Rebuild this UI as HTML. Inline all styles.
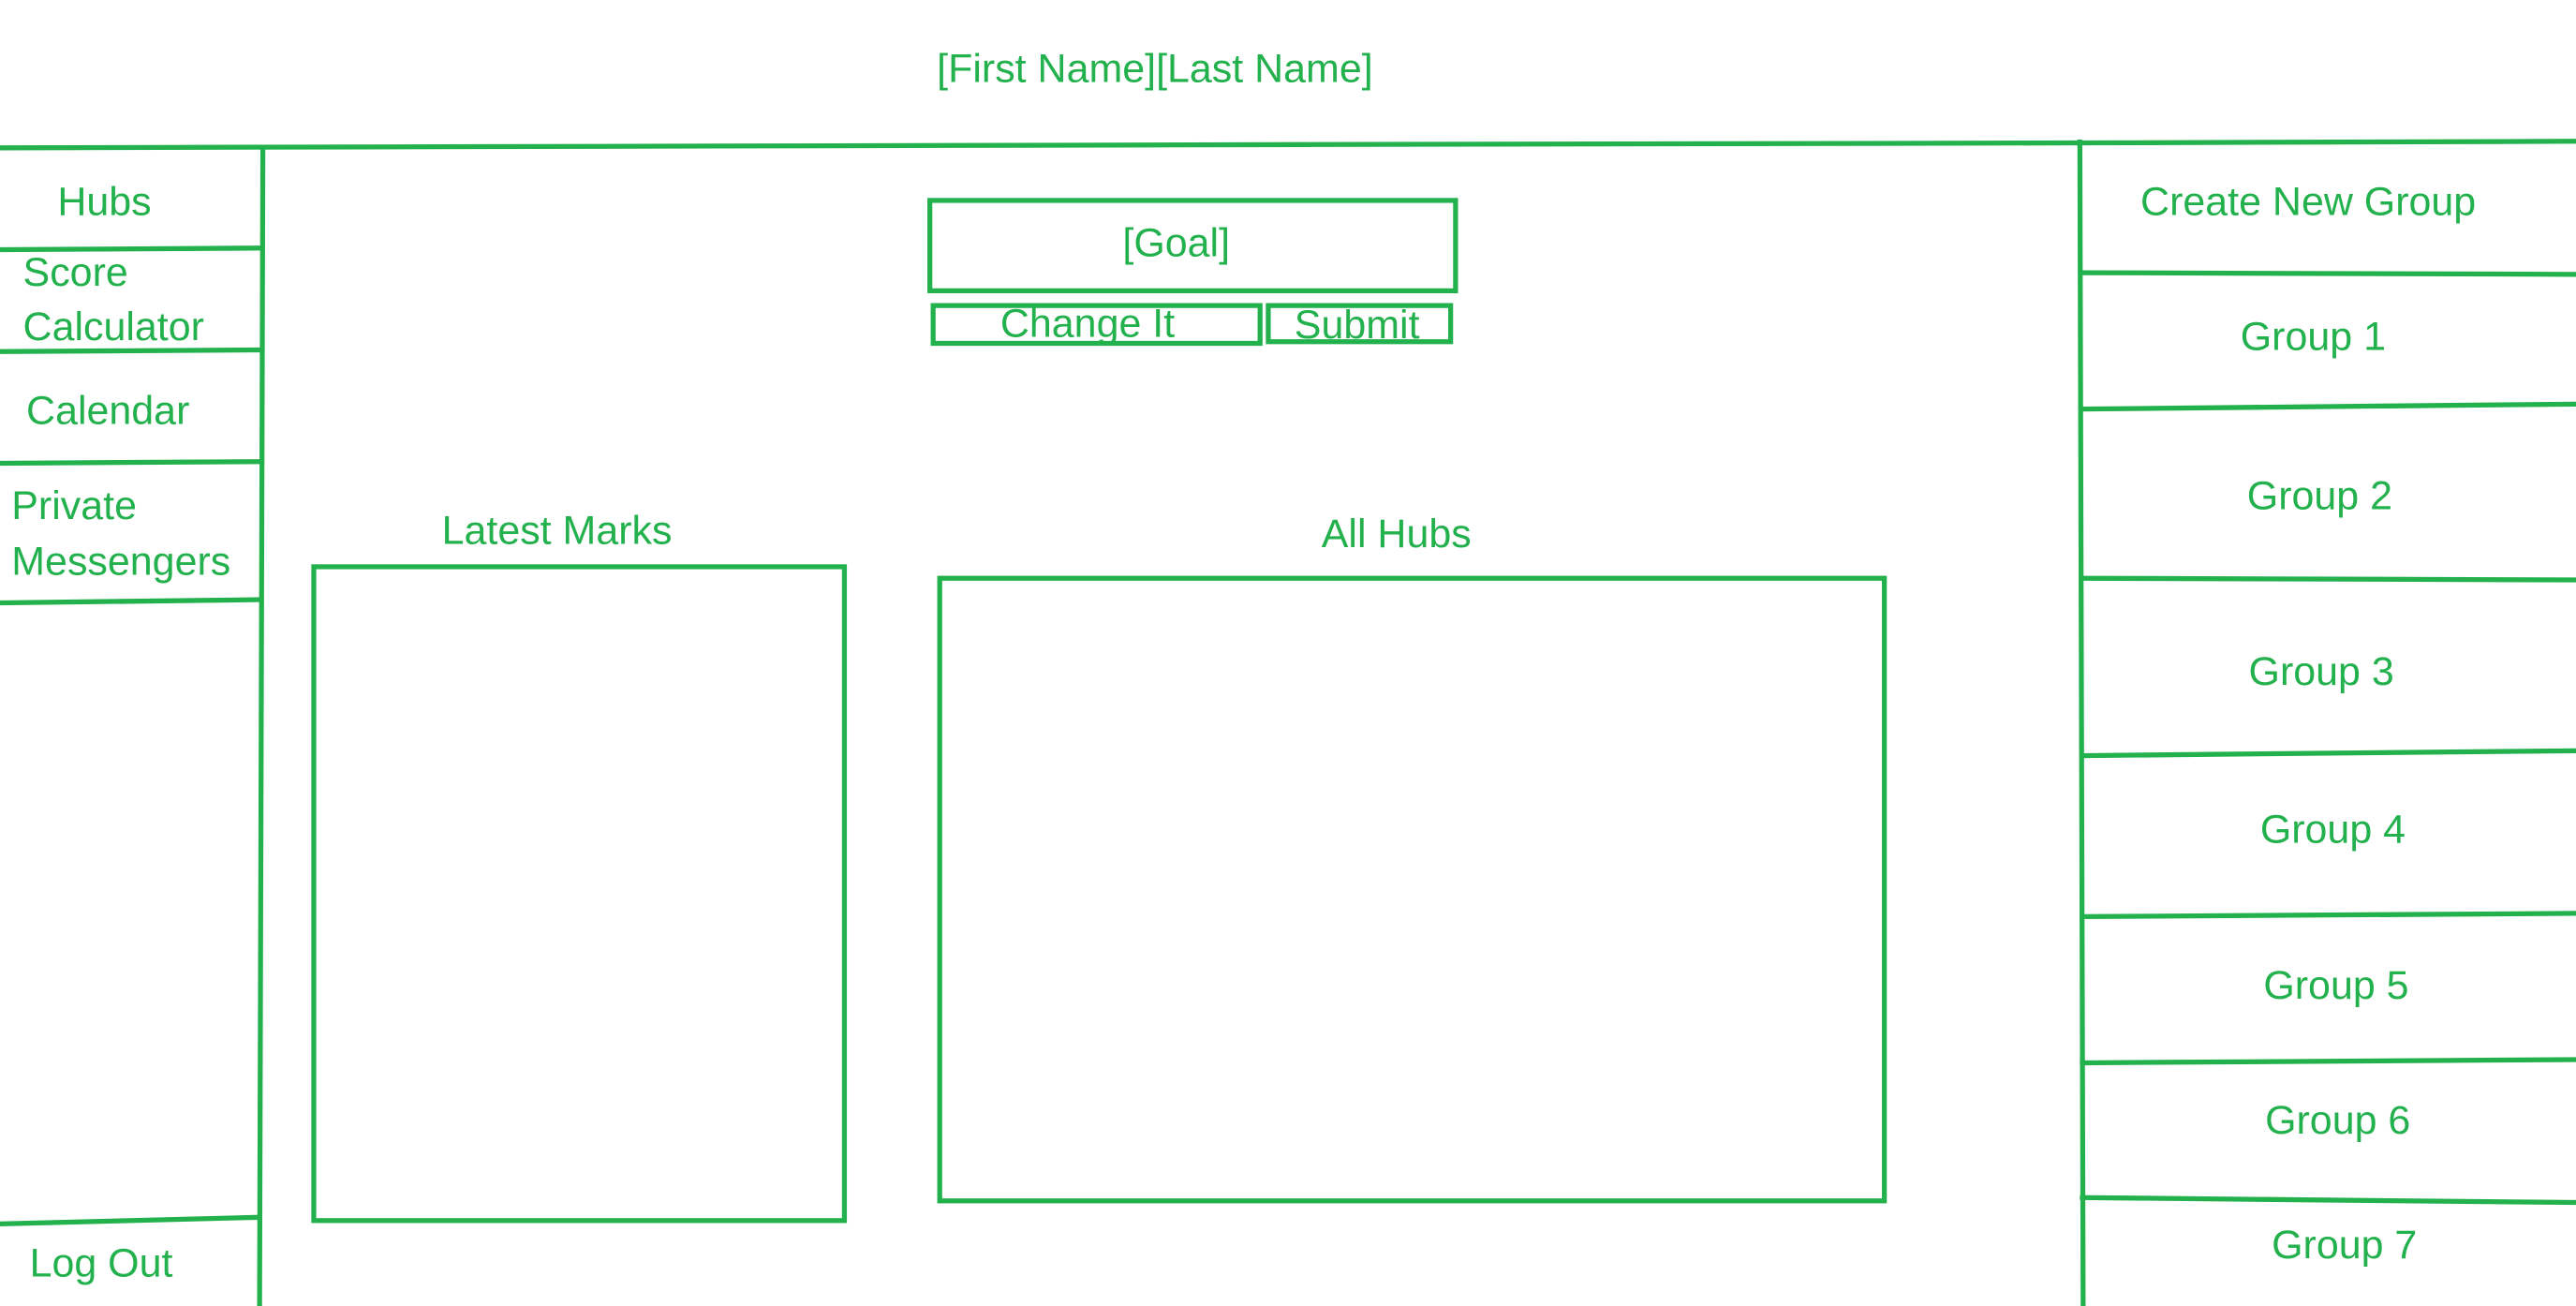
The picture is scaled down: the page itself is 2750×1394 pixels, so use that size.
<!DOCTYPE html>
<html><head><meta charset="utf-8"><style>
html,body{margin:0;padding:0;background:#fff;width:2750px;height:1394px;overflow:hidden}
svg{display:block}
text{font-family:"Liberation Sans",sans-serif;font-size:24.5px;fill:#22b14c}
</style></head><body>
<svg width="2750" height="1394" viewBox="0 0 1568 795" preserveAspectRatio="none">
<g stroke="#22b14c" stroke-width="3" fill="none">
<polyline points="0,90 800,88 1266,87 1568,86"/>
<line x1="160" y1="90" x2="158" y2="795"/>
<line x1="0" y1="152" x2="160" y2="151"/>
<line x1="0" y1="214" x2="160" y2="213"/>
<line x1="0" y1="282" x2="160" y2="281"/>
<line x1="0" y1="367" x2="160" y2="365"/>
<line x1="0" y1="745" x2="158" y2="741"/>
<line x1="1266" y1="85" x2="1268" y2="795"/>
<line x1="1266" y1="166" x2="1568" y2="167"/>
<line x1="1266" y1="249" x2="1568" y2="246"/>
<line x1="1266" y1="352" x2="1568" y2="353"/>
<line x1="1266" y1="460" x2="1568" y2="457"/>
<line x1="1266" y1="558" x2="1568" y2="556"/>
<line x1="1266" y1="647" x2="1568" y2="645"/>
<line x1="1266" y1="729" x2="1568" y2="732"/>
<rect x="566" y="122" width="320" height="55"/>
<rect x="568" y="186" width="199" height="23"/>
<rect x="772" y="186" width="111" height="22"/>
<rect x="191" y="345" width="323" height="398"/>
<rect x="572" y="352" width="575" height="379"/>
</g>
<text x="703" y="50" text-anchor="middle">[First Name][Last Name]</text>
<text x="35" y="131">Hubs</text>
<text x="14" y="174">Score</text>
<text x="14" y="207">Calculator</text>
<text x="16" y="258">Calendar</text>
<text x="7" y="316">Private</text>
<text x="7" y="350">Messengers</text>
<text x="18" y="777">Log Out</text>
<text x="716" y="156" text-anchor="middle">[Goal]</text>
<text x="662" y="205" text-anchor="middle">Change It</text>
<text x="826" y="206" text-anchor="middle">Submit</text>
<text x="339" y="331" text-anchor="middle">Latest Marks</text>
<text x="850" y="333" text-anchor="middle">All Hubs</text>
<text x="1405" y="131" text-anchor="middle">Create New Group</text>
<text x="1408" y="213" text-anchor="middle">Group 1</text>
<text x="1412" y="310" text-anchor="middle">Group 2</text>
<text x="1413" y="417" text-anchor="middle">Group 3</text>
<text x="1420" y="513" text-anchor="middle">Group 4</text>
<text x="1422" y="608" text-anchor="middle">Group 5</text>
<text x="1423" y="690" text-anchor="middle">Group 6</text>
<text x="1427" y="766" text-anchor="middle">Group 7</text>
</svg>
</body></html>
